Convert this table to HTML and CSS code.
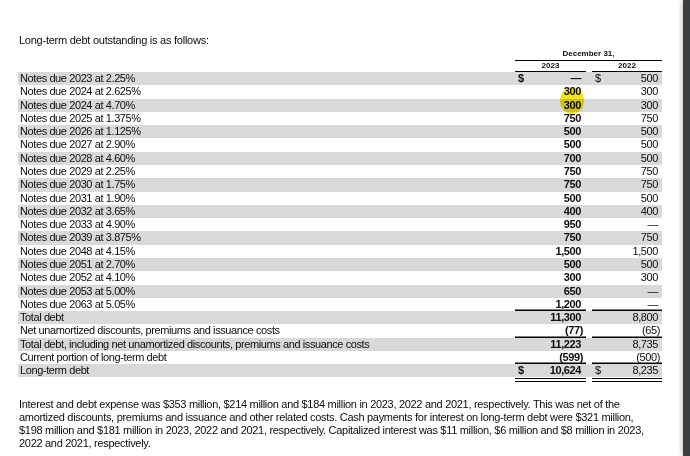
FILE: index.html
```html
<!DOCTYPE html>
<html>
<head>
<meta charset="utf-8">
<link rel="stylesheet" href="styles.css">
</head>
<body>
<div class="page">
  <main class="content">
    <p class="title">Long-term debt outstanding is as follows:</p>
    <div class="table">
      <div class="head">
        <div class="head-label"></div>
        <div class="head-span">December 31,</div>
      </div>
      <div class="head head-years">
        <div class="head-label"></div>
        <div class="year">2023</div>
        <div class="gap"></div>
        <div class="year">2022</div>
      </div>

      <div class="row shade"><div class="label">Notes due 2023 at 2.25%</div><div class="cell cur b"><span class="sign">$</span><span>—</span></div><div class="gap"></div><div class="cell"><span class="sign">$</span><span>500</span></div></div>
      <div class="row"><div class="label">Notes due 2024 at 2.625%</div><div class="cell cur b"><span>300</span></div><div class="gap"></div><div class="cell"><span>300</span></div></div>
      <div class="row shade"><div class="label">Notes due 2024 at 4.70%</div><div class="cell cur b"><span>300</span></div><div class="gap"></div><div class="cell"><span>300</span></div></div>
      <div class="row"><div class="label">Notes due 2025 at 1.375%</div><div class="cell cur b"><span>750</span></div><div class="gap"></div><div class="cell"><span>750</span></div></div>
      <div class="row shade"><div class="label">Notes due 2026 at 1.125%</div><div class="cell cur b"><span>500</span></div><div class="gap"></div><div class="cell"><span>500</span></div></div>
      <div class="row"><div class="label">Notes due 2027 at 2.90%</div><div class="cell cur b"><span>500</span></div><div class="gap"></div><div class="cell"><span>500</span></div></div>
      <div class="row shade"><div class="label">Notes due 2028 at 4.60%</div><div class="cell cur b"><span>700</span></div><div class="gap"></div><div class="cell"><span>500</span></div></div>
      <div class="row"><div class="label">Notes due 2029 at 2.25%</div><div class="cell cur b"><span>750</span></div><div class="gap"></div><div class="cell"><span>750</span></div></div>
      <div class="row shade"><div class="label">Notes due 2030 at 1.75%</div><div class="cell cur b"><span>750</span></div><div class="gap"></div><div class="cell"><span>750</span></div></div>
      <div class="row"><div class="label">Notes due 2031 at 1.90%</div><div class="cell cur b"><span>500</span></div><div class="gap"></div><div class="cell"><span>500</span></div></div>
      <div class="row shade"><div class="label">Notes due 2032 at 3.65%</div><div class="cell cur b"><span>400</span></div><div class="gap"></div><div class="cell"><span>400</span></div></div>
      <div class="row"><div class="label">Notes due 2033 at 4.90%</div><div class="cell cur b"><span>950</span></div><div class="gap"></div><div class="cell"><span>—</span></div></div>
      <div class="row shade"><div class="label">Notes due 2039 at 3.875%</div><div class="cell cur b"><span>750</span></div><div class="gap"></div><div class="cell"><span>750</span></div></div>
      <div class="row"><div class="label">Notes due 2048 at 4.15%</div><div class="cell cur b"><span>1,500</span></div><div class="gap"></div><div class="cell"><span>1,500</span></div></div>
      <div class="row shade"><div class="label">Notes due 2051 at 2.70%</div><div class="cell cur b"><span>500</span></div><div class="gap"></div><div class="cell"><span>500</span></div></div>
      <div class="row"><div class="label">Notes due 2052 at 4.10%</div><div class="cell cur b"><span>300</span></div><div class="gap"></div><div class="cell"><span>300</span></div></div>
      <div class="row shade"><div class="label">Notes due 2053 at 5.00%</div><div class="cell cur b"><span>650</span></div><div class="gap"></div><div class="cell"><span>—</span></div></div>
      <div class="row"><div class="label">Notes due 2063 at 5.05%</div><div class="cell cur b rule"><span>1,200</span></div><div class="gap"></div><div class="cell rule"><span>—</span></div></div>
      <div class="row shade"><div class="label">Total debt</div><div class="cell cur b"><span>11,300</span></div><div class="gap"></div><div class="cell"><span>8,800</span></div></div>
      <div class="row"><div class="label">Net unamortized discounts, premiums and issuance costs</div><div class="cell cur b rule"><span class="neg">(77)</span></div><div class="gap"></div><div class="cell rule"><span class="neg">(65)</span></div></div>
      <div class="row shade"><div class="label">Total debt, including net unamortized discounts, premiums and issuance costs</div><div class="cell cur b"><span>11,223</span></div><div class="gap"></div><div class="cell"><span>8,735</span></div></div>
      <div class="row"><div class="label">Current portion of long-term debt</div><div class="cell cur b rule"><span class="neg">(599)</span></div><div class="gap"></div><div class="cell rule"><span class="neg">(500)</span></div></div>
      <div class="row shade last"><div class="label">Long-term debt</div><div class="cell cur b dbl"><span class="sign">$</span><span>10,624</span></div><div class="gap"></div><div class="cell dbl"><span class="sign">$</span><span>8,235</span></div></div>

      <div class="highlight"></div>
    </div>
    <p class="note">Interest and debt expense was $353 million, $214 million and $184 million in 2023, 2022 and 2021, respectively. This was net of the amortized discounts, premiums and issuance and other related costs. Cash payments for interest on long-term debt were $321 million, $198 million and $181 million in 2023, 2022 and 2021, respectively. Capitalized interest was $11 million, $6 million and $8 million in 2023, 2022 and 2021, respectively.</p>
  </main>
  <div class="edge"></div>
</div>
</body>
</html>
```

FILE: styles.css
```css
* { box-sizing: border-box; }
html, body { margin: 0; padding: 0; background: #fff; }
body {
  font-family: "Liberation Sans", Arial, Helvetica, sans-serif;
  color: #0d0d0d;
  font-size: 11px;
  letter-spacing: -0.4px;
}
.page {
  display: flex;
  height: 456px;
  overflow: hidden;
}
.content {
  flex: 1;
  padding: 34px 0 0 18px;
}
.edge {
  width: 7px;
  background: #3b3e41;
  box-shadow: -2px 0 4px rgba(0, 0, 0, 0.18);
}
.title {
  margin: 0 0 0 1px;
  line-height: 13px;
  letter-spacing: -0.25px;
}
.table {
  position: relative;
  width: 644px;
}
.head, .row {
  display: grid;
  grid-template-columns: 497px 71px 6px 70px;
}
.head {
  height: 13px;
  font-weight: bold;
  font-size: 8px;
  letter-spacing: 0;
  line-height: 12px;
}
.head-span {
  grid-column: 2 / 5;
  text-align: center;
  border-bottom: 1.5px solid #000;
  padding-top: 1px;
}
.head-years {
  height: 12px;
  line-height: 10px;
}
.year {
  text-align: center;
  border-bottom: 1.5px solid #000;
  padding-top: 1px;
}
.row {
  height: 13.29px;
  line-height: 13.29px;
}
.row.shade { background: #d9d9d9; }
.label {
  padding-left: 2px;
  white-space: nowrap;
}
.cell {
  display: flex;
  justify-content: flex-end;
  padding: 0 4px 0 3px;
}
.cell.cur { padding: 0 5px 0 3px; }
.cell .sign { margin-right: auto; }
.b { font-weight: bold; }
.neg { margin-right: -2px; }
.rule { box-shadow: inset 0 -1.5px 0 #000; }
.row.last {
  height: 17.5px;
  background: linear-gradient(#d9d9d9, #d9d9d9) no-repeat 0 0 / 100% 13.29px;
}
.row.last .label { height: 13.29px; }
.row.last .cell {
  height: 17.5px;
  align-items: flex-start;
  border-bottom: 4px double #000;
  background: linear-gradient(#d9d9d9, #d9d9d9) no-repeat 0 0 / 100% 13.29px;
}
.highlight {
  position: absolute;
  left: 542px;
  top: 40px;
  width: 24px;
  height: 27px;
  border-radius: 50%;
  background: #f3e31e;
  mix-blend-mode: multiply;
}
.note {
  margin: 16px 0 0 1px;
  width: 634px;
  line-height: 13px;
  letter-spacing: -0.3px;
}
```
